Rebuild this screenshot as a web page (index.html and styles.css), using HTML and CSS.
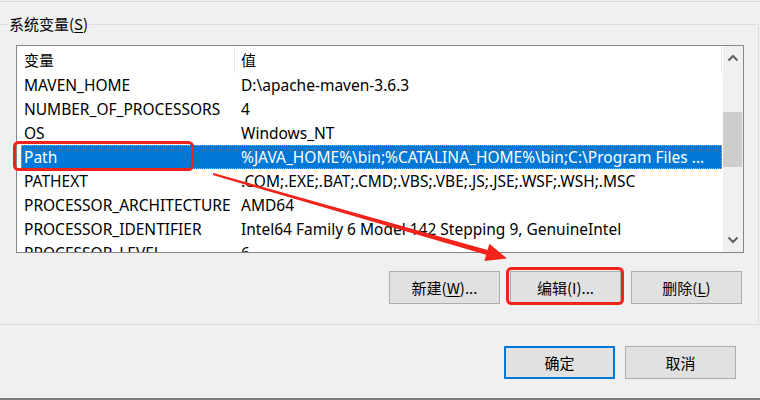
FILE: index.html
```html
<!DOCTYPE html>
<html lang="zh-CN">
<head>
<meta charset="utf-8">
<title>系统变量</title>
<link rel="stylesheet" href="styles.css">
</head>
<body>
<div class="page">
  <div class="topline"></div>
  <div class="group">
    <div class="legend">系统变量(<u>S</u>)</div>
    <div class="listbox">
      <div class="listmain">
        <div class="header">
          <div class="hcell hname">变量</div>
          <div class="hcell hval">值</div>
        </div>
        <div class="rows">
          <div class="row"><div class="c1">MAVEN_HOME</div><div class="c2">D:\apache-maven-3.6.3</div></div>
          <div class="row"><div class="c1">NUMBER_OF_PROCESSORS</div><div class="c2">4</div></div>
          <div class="row"><div class="c1">OS</div><div class="c2">Windows_NT</div></div>
          <div class="row selected"><div class="c1">Path</div><div class="c2">%JAVA_HOME%\bin;%CATALINA_HOME%\bin;C:\Program Files ...</div></div>
          <div class="row"><div class="c1">PATHEXT</div><div class="c2">.COM;.EXE;.BAT;.CMD;.VBS;.VBE;.JS;.JSE;.WSF;.WSH;.MSC</div></div>
          <div class="row"><div class="c1">PROCESSOR_ARCHITECTURE</div><div class="c2">AMD64</div></div>
          <div class="row"><div class="c1">PROCESSOR_IDENTIFIER</div><div class="c2">Intel64 Family 6 Model 142 Stepping 9, GenuineIntel</div></div>
          <div class="row"><div class="c1">PROCESSOR_LEVEL</div><div class="c2">6</div></div>
        </div>
      </div>
      <div class="scrollbar">
        <div class="sbtn">
          <svg width="12" height="8" viewBox="0 0 12 8"><polyline points="1.5,6.5 6,2 10.5,6.5" fill="none" stroke="#606060" stroke-width="2"/></svg>
        </div>
        <div class="track"><div class="thumb"></div></div>
        <div class="sbtn">
          <svg width="12" height="8" viewBox="0 0 12 8"><polyline points="1.5,1.5 6,6 10.5,1.5" fill="none" stroke="#606060" stroke-width="2"/></svg>
        </div>
      </div>
    </div>
    <div class="btnrow">
      <button class="btn">新建(<u>W</u>)...</button>
      <button class="btn">编辑(I)...</button>
      <button class="btn">删除(<u>L</u>)</button>
    </div>
  </div>
  <div class="dlgbtns">
    <button class="btn primary">确定</button>
    <button class="btn">取消</button>
  </div>
  <div class="bottomline"></div>
  <svg class="annot" width="760" height="400" viewBox="0 0 760 400">
    <rect x="14.5" y="142.5" width="178" height="27" rx="4" fill="none" stroke="#f2231a" stroke-width="3"/>
    <rect x="507.5" y="268.5" width="115" height="35" rx="4" fill="none" stroke="#f2231a" stroke-width="3"/>
    <polygon points="213.3,173.0 487.6,250.0 489.4,243.8 507,258.5 484.4,261.0 486.2,254.8 212.7,175.0" fill="#f2231a"/>
  </svg>
</div>
</body>
</html>
```

FILE: styles.css
```css
* { box-sizing: border-box; }
html, body { margin: 0; padding: 0; }
body {
  background: #f0f0f0;
  font-family: "Noto Sans", "Noto Sans CJK SC", sans-serif;
  font-size: 15px;
  color: #000;
}
.page {
  position: relative;
  width: 760px;
  height: 400px;
  overflow: hidden;
  display: flex;
  flex-direction: column;
}
.topline {
  margin-top: 1px;
  height: 1px;
  background: #dadada;
}
.group {
  margin-top: 22px;
  margin-left: -1px;
  width: 760px;
  height: 301px;
  border: 1px solid #dcdcdc;
  display: flex;
  flex-direction: column;
}
.legend {
  align-self: flex-start;
  margin-top: -11px;
  margin-left: 8px;
  padding: 0 1px;
  height: 20px;
  line-height: 20px;
  background: #f0f0f0;
  font-family: "Noto Sans CJK SC", sans-serif;
}
.legend u, .btn u { text-underline-offset: 2px; }
.listbox {
  margin-top: 11px;
  margin-left: 16px;
  width: 728px;
  height: 208px;
  border: 1px solid #828790;
  background: #fff;
  display: flex;
}
.listmain {
  flex: 1;
  overflow: hidden;
  display: flex;
  flex-direction: column;
}
.header {
  height: 27px;
  display: flex;
  flex-shrink: 0;
}
.hcell {
  font-family: "Noto Sans CJK SC", sans-serif;
  border-right: 1px solid #e5e5e5;
  margin: 1px 0 0;
  line-height: 25px;
}
.hname { width: 218px; padding-left: 7px; }
.hval { width: 487px; padding-left: 6px; }
.rows {
  display: flex;
  flex-direction: column;
  margin-left: 4px;
  margin-right: 1px;
  font-size: 15.5px;
}
.row {
  display: flex;
  height: 24px;
  line-height: 24px;
  flex-shrink: 0;
  white-space: nowrap;
}
.c1 { width: 213px; padding-left: 3px; overflow: hidden; }
.c2 { flex: 1; padding-left: 7px; overflow: hidden; }
.row.selected {
  background: #0078d7;
  color: #fff;
  outline: 1px dotted #e9a25a;
  outline-offset: -1px;
}
.scrollbar {
  width: 20px;
  background: #f0f0f0;
  display: flex;
  flex-direction: column;
}
.sbtn {
  height: 24px;
  display: flex;
  align-items: center;
  justify-content: center;
}
.track { flex: 1; }
.thumb {
  margin-top: 42px;
  height: 55px;
  width: 19px;
  background: #cdcdcd;
}
.btnrow {
  display: flex;
  justify-content: flex-end;
  gap: 10px;
  margin-top: 18px;
  margin-right: 16px;
}
.btn {
  width: 111px;
  height: 33px;
  padding: 0;
  background: #e1e1e1;
  border: 1px solid #adadad;
  font-family: "Noto Sans CJK SC", sans-serif;
  font-size: 15px;
  color: #000;
  border-radius: 0;
}
.btn.primary { border: 2px solid #0078d7; }
.dlgbtns {
  display: flex;
  justify-content: flex-end;
  gap: 10px;
  margin-top: 21px;
  margin-right: 24px;
}
.bottomline {
  margin-top: 19px;
  height: 2px;
  background: #7c7c7c;
}
.annot {
  position: absolute;
  left: 0;
  top: 0;
  pointer-events: none;
}
```
